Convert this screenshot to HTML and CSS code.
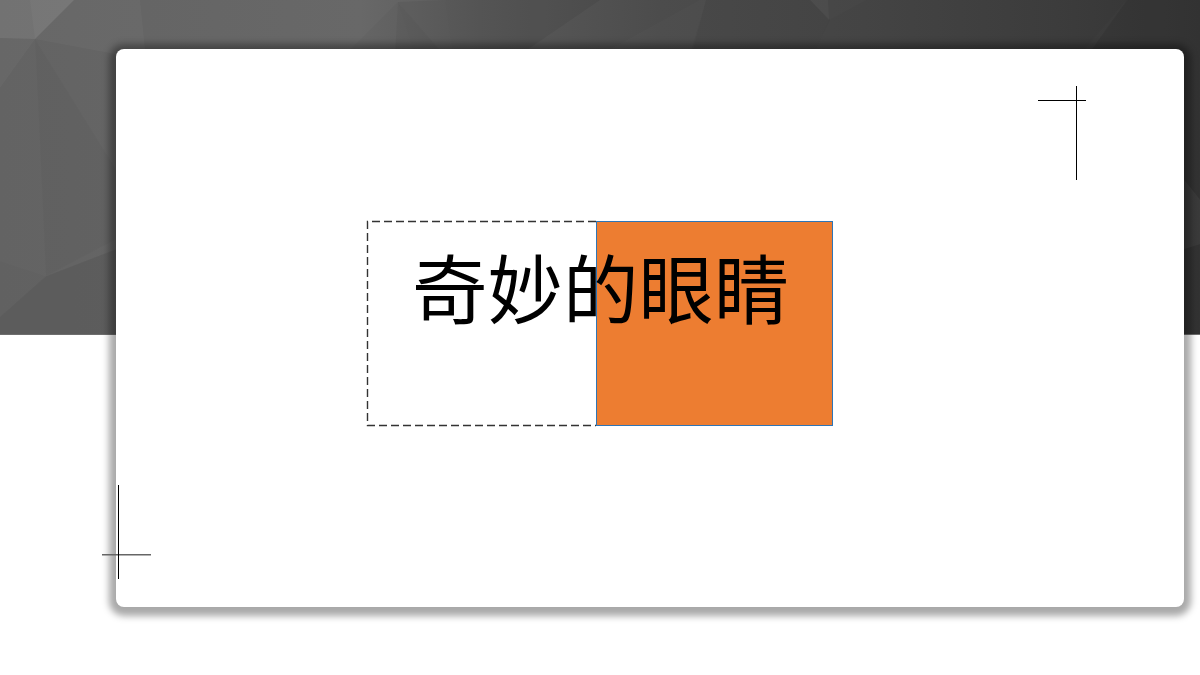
FILE: index.html
```html
<!DOCTYPE html>
<html lang="zh">
<head>
<meta charset="utf-8">
<title>奇妙的眼睛</title>
<link rel="stylesheet" href="styles.css">
</head>
<body>
<main class="stage">
  <div class="backdrop">
    <svg class="poly" viewBox="0 0 1200 335" preserveAspectRatio="none" aria-hidden="true">
      <defs>
        <linearGradient id="base" x1="0" y1="0" x2="1" y2="0">
          <stop offset="0" stop-color="#636363"/>
          <stop offset="0.3" stop-color="#686868"/>
          <stop offset="0.4" stop-color="#5a5a5a"/>
          <stop offset="0.55" stop-color="#4c4c4c"/>
          <stop offset="0.72" stop-color="#464646"/>
          <stop offset="0.88" stop-color="#3e3e3e"/>
          <stop offset="1" stop-color="#363636"/>
        </linearGradient>
      </defs>
      <rect width="1200" height="335" fill="url(#base)"/>
      <polygon points="0,0 74,0 35,39 0,38" fill="#fff" opacity=".1"/>
      <polygon points="30,0 74,0 35,39" fill="#fff" opacity=".03"/>
      <polygon points="74,0 140,0 146,60 35,39" fill="#fff" opacity=".03"/>
      <polygon points="0,38 35,39 0,88" fill="#fff" opacity=".03"/>
      <polygon points="35,39 116,170 116,240 46,277 38,100" fill="#000" opacity=".025"/>
      <polygon points="0,262 46,277 0,318" fill="#000" opacity=".015"/>
      <polygon points="0,318 46,277 116,250 116,335 0,335" fill="#000" opacity=".07"/>
      <polygon points="398,2 345,55 444,55" fill="#000" opacity=".025"/>
      <polygon points="398,2 395,55 415,55" fill="#000" opacity=".04"/>
      <polygon points="398,2 445,0 453,55 415,55" fill="#000" opacity=".05"/>
      <polygon points="445,0 600,0 520,55 453,55" fill="#000" opacity=".06"/>
      <polygon points="700,0 706,0 692,55 600,55" fill="#fff" opacity=".015"/>
      <polygon points="810,0 830,20 813,55 690,55 706,0" fill="#000" opacity=".03"/>
      <polygon points="810,0 828,0 829,20" fill="#fff" opacity=".03"/>
      <polygon points="829,20 866,0 1127,0 1080,55 813,55" fill="#000" opacity=".02"/>
      <polygon points="1127,0 1200,0 1200,200 1184,180 1184,55 1088,55" fill="#000" opacity=".07"/>
      <polygon points="1184,180 1200,200 1200,245 1184,250" fill="#fff" opacity=".025"/>
      <polygon points="1184,250 1200,245 1200,335 1184,335" fill="#000" opacity=".07"/>
    </svg>
  </div>
  <section class="card">
    <div class="figure">
      <svg class="half half-dashed" viewBox="0 0 229 205" aria-hidden="true">
        <path d="M229 .5H.5V204.5H229"/>
      </svg>
      <div class="half half-orange"></div>
      <h1 class="title">奇妙的眼睛</h1>
    </div>
  </section>
  <svg class="cross cross-top" viewBox="0 0 48 94" aria-hidden="true">
    <path d="M0 14.5H48M38.5 0V94" />
  </svg>
  <svg class="cross cross-bottom" viewBox="0 0 49 94" aria-hidden="true">
    <path class="soft" d="M0 69.7H49" />
    <path d="M16.5 0V94" />
  </svg>
</main>
</body>
</html>
```

FILE: styles.css
```css
* { box-sizing: border-box; }

html, body {
  margin: 0;
  padding: 0;
  background: #fff;
}

.stage {
  position: relative;
  display: grid;
  width: 1200px;
  height: 675px;
  overflow: hidden;
  background: #fff;
}

.backdrop {
  grid-area: 1 / 1;
  height: 335px;
  border-bottom: 1px solid #6e6e6e;
}

.poly {
  display: block;
  width: 100%;
  height: 100%;
}

.card {
  grid-area: 1 / 1;
  margin: 49px 16px 68px 116px;
  padding: 172px 351px 181px 251px;
  background: #fff;
  border-radius: 8px;
  box-shadow: 0 2px 7px 7px rgba(0, 0, 0, 0.34);
}

.figure {
  position: relative;
  display: flex;
  height: 205px;
}

.half { height: 100%; }

.half-dashed {
  display: block;
  width: 229px;
  overflow: visible;
  fill: none;
  stroke: #333;
  stroke-width: 1.4;
  stroke-dasharray: 8 4;
}

.half-orange {
  width: 237px;
  background: #ed7d31;
  border: 1px solid #2e75b6;
}

.title {
  position: absolute;
  top: 16px;
  left: 45px;
  margin: 0;
  font-family: "Noto Sans CJK SC", "Noto Sans", sans-serif;
  font-size: 75.5px;
  font-weight: 400;
  line-height: 96px;
  color: #000;
  white-space: nowrap;
}

.cross {
  position: absolute;
  overflow: visible;
  fill: none;
  stroke: #000;
  stroke-width: 1;
}

.cross .soft {
  stroke: #666;
  stroke-width: 1.6;
}

.cross-top {
  top: 86px;
  left: 1038px;
  width: 48px;
  height: 94px;
}

.cross-bottom {
  top: 485px;
  left: 102px;
  width: 49px;
  height: 94px;
}
```
